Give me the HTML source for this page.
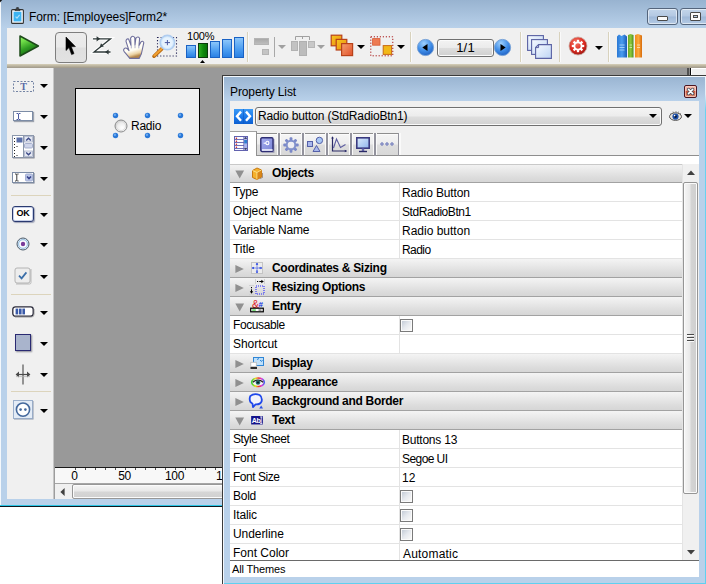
<!DOCTYPE html>
<html><head><meta charset="utf-8">
<style>
*{box-sizing:border-box;margin:0;padding:0}
html,body{width:706px;height:584px;overflow:hidden;background:#fff}
body{position:relative;font-family:"Liberation Sans",sans-serif;font-size:12px;color:#000}
.a{position:absolute}
svg{position:absolute;overflow:visible}
/* main window */
#win{left:0;top:0;width:706px;height:507px;background:#b9d1ea;border-bottom:1px solid #0e1820;box-shadow:inset 0 -1px 0 #2cc6e6}
#tbar{left:0;top:0;width:706px;height:28px;background:linear-gradient(#98b3d0 0,#b9d1ea 100%)}
#title{left:29px;top:10px;font-size:12px;line-height:14px;white-space:nowrap;letter-spacing:-0.08px}
#tool{left:7px;top:28px;width:699px;height:36px;background:#f0f0f0}
#tan{left:7px;top:64px;width:699px;height:4px;background:linear-gradient(#d6cfba,#bdb6a0 45%,#9e978a)}
#side{left:7px;top:68px;width:46px;height:431px;background:#f0f0f0}
#sideline{left:53px;top:68px;width:2px;height:431px;background:linear-gradient(90deg,#c6c6c6 50%,#9d9d9d 50%)}
#canvas{left:54px;top:68px;width:633px;height:400px;background:#999}
.sep{width:1px;top:32px;height:30px;background:#d8d2bd;box-shadow:1px 0 0 #fafafa}
.dd{width:0;height:0;border-left:4px solid transparent;border-right:4px solid transparent;border-top:4px solid #000}
.dd.g{border-top-color:#a0a0a0}
/* panel */
#panel{left:222px;top:75px;width:484px;height:509px;background:#b9d1ea;border-left:1px solid #3b3b3b;border-top:1px solid #3b3b3b}
#pbody{left:230px;top:101px;width:469px;height:476px;background:#f0f0f0}
.row{left:230px;width:452px;height:19px;background:#fff;border-bottom:1px solid #e3e3e3;white-space:nowrap}
.row .l{position:absolute;left:3px;top:2px;line-height:14px}
.row .v{position:absolute;left:172px;top:3px;line-height:14px}
.row .c{position:absolute;left:169px;top:0;width:1px;height:18px;background:#e3e3e3}
.hd{left:230px;width:452px;height:19px;background:linear-gradient(#f4f4f4,#e9e9e9 35%,#dcdcdc 75%,#d6d6d6 100%);border-bottom:1px solid #a2a2a2;white-space:nowrap}
.hd b{position:absolute;left:42px;top:2px;line-height:14px;letter-spacing:-0.3px}
.cb{position:absolute;left:170px;top:3px;width:13px;height:13px;border:1px solid #7a7a7a;background:linear-gradient(135deg,#c9d0da 15%,#e6e9ee 50%,#f6f6f6 85%);box-shadow:inset 0 0 0 1px #fafafa;}
</style></head><body>
<div id="win" class="a"></div>
<div id="tbar" class="a"></div>
<div id="title" class="a">Form: [Employees]Form2*</div>
<div id="tool" class="a"></div>
<div id="tan" class="a"></div>
<div id="side" class="a"></div>
<div id="sideline" class="a"></div>
<div id="canvas" class="a"></div>
<div class="a" style="left:0;top:0;width:1px;height:505px;background:#f4f8fc"></div>
<div class="a" style="left:1px;top:28px;width:6px;height:471px;background:#b9d1ea"></div>
<div class="a" style="left:1px;top:499px;width:221px;height:6px;background:#b9d1ea"></div>
<svg width="3" height="3" style="left:0;top:0" viewBox="0 0 3 3"><path d="M0 0H2.2L0 2.6Z" fill="#111"/></svg>
<svg width="13" height="17" style="left:11px;top:7px" viewBox="0 0 13 17"><rect x=".6" y="2.6" width="11.8" height="13.8" rx="1" fill="#f2f6fa" stroke="#333" stroke-width="1.1"/><rect x="2.6" y="4.8" width="7.8" height="9.6" fill="#3db4f2"/><path d="M4 3.6H9V2.2H7.4V.6H5.6V2.2H4Z" fill="#444" stroke="#222" stroke-width=".6"/><path d="M4.6 9.6 L6 11.2 L8.6 7.8" fill="none" stroke="#aee0fa" stroke-width="1.1"/></svg>
<div class="a" style="left:647px;top:8px;width:31px;height:17px;border:1px solid #54657c;border-radius:3px;background:linear-gradient(#c3d5ea,#b3c8e2 48%,#9fb8d8 52%,#b4cae4);box-shadow:inset 0 0 0 1px rgba(255,255,255,.55)"></div>
<div class="a" style="left:657px;top:16px;width:11px;height:5px;border:1px solid #4a4a4a;border-radius:1px;background:#fafafa"></div>
<div class="a" style="left:680px;top:8px;width:31px;height:17px;border:1px solid #54657c;border-radius:3px;background:linear-gradient(#c3d5ea,#b3c8e2 48%,#9fb8d8 52%,#b4cae4);box-shadow:inset 0 0 0 1px rgba(255,255,255,.55)"></div>
<div class="a" style="left:690px;top:12px;width:11px;height:9px;border:1px solid #4a4a4a;border-radius:1px;background:#fafafa"></div>
<div class="a" style="left:693px;top:15px;width:5px;height:3px;border:1px solid #4a4a4a;background:#b8cce4"></div>
<svg width="22" height="24" style="left:18px;top:34px" viewBox="0 0 22 24"><defs><linearGradient id="pl" x1=".1" y1="0" x2=".55" y2="1"><stop offset="0" stop-color="#8ff562"/><stop offset=".25" stop-color="#6fdc48"/><stop offset=".6" stop-color="#2f9c22"/><stop offset="1" stop-color="#0f5c0c"/></linearGradient></defs><path d="M2 2 L20.4 12 L2 22Z" fill="url(#pl)" stroke="#1d4a1a" stroke-width="1.5" stroke-linejoin="round"/></svg>
<div class="a" style="left:55px;top:32px;width:32px;height:31px;border:1px solid #7e7e7e;border-radius:4px;background:linear-gradient(#ececec,#e9e9e9 48%,#dfdfdf 52%,#e2e2e2)"></div>
<svg width="12" height="20" style="left:65px;top:36px" viewBox="0 0 12 20"><path d="M1 1 V14.5 L4 11.6 L6.6 18.6 L9 17.6 L6.3 10.8 L10.4 10.6Z" fill="#000" stroke="#000" stroke-width=".6" stroke-linejoin="round"/></svg>
<svg width="20" height="22" style="left:92px;top:35px" viewBox="0 0 20 22"><g fill="none" stroke="#fff" stroke-width="3.4" opacity=".9"><path d="M1 3.8H18.5L2 17H18.5"/></g><g fill="none" stroke="#2f3a3a" stroke-width="1.3"><path d="M1 3.8H18.5L2 17H18.5"/></g><path d="M8.2 3.8 L4.6 1.2V6.4Z M13 17 L16.6 14.4V19.6Z M7.6 12.6 L11.8 11.6 L9 8.2Z" fill="#2f3a3a"/></svg>
<svg width="22" height="25" style="left:123px;top:35px" viewBox="0 0 22 25"><defs><linearGradient id="hd" x1="0" y1="0" x2=".25" y2="1"><stop offset="0" stop-color="#fff"/><stop offset=".7" stop-color="#fffdf4"/><stop offset=".88" stop-color="#ecd3a4"/><stop offset="1" stop-color="#b4864a"/></linearGradient></defs><path d="M1 14 Q2.6 12 4.6 14 L6 15.6 L3 6.4 Q3 3.4 5.6 4 L8 10.4 L7.6 3 Q9.6 -.2 11.8 2.6 L12 10 L12.8 3.4 Q14.8 .6 16.6 3.2 L16 10.6 L17.8 7.2 Q19.8 5.2 20.8 7.6 L19.4 14.2 Q18.8 19.4 16.2 23.4 H6.8 Q4.2 20 1.2 16.6 Q0 15 1 14Z" fill="url(#hd)" stroke="#6e6e9c" stroke-width="1.1" stroke-linejoin="round"/><path d="M8.3 10.6V13.4M12 10.2V13.2M15.8 10.8V13.4" stroke="#9a9ac0" stroke-width=".8"/></svg>
<svg width="26" height="24" style="left:152px;top:34px" viewBox="0 0 26 24"><rect x="5.5" y="3.5" width="19" height="18.5" fill="none" stroke="#1e1e50" stroke-width="1.1" stroke-dasharray="1.1 2"/><path d="M10 14.6 L2 22.2" stroke="#b86a10" stroke-width="3.6" stroke-linecap="round"/><path d="M10 14.4 L2.4 21.6" stroke="#f2a030" stroke-width="2" stroke-linecap="round"/><circle cx="15.4" cy="8.6" r="7.2" fill="#d4eafd" stroke="#b0cdf0" stroke-width="1.6"/><circle cx="15.4" cy="8.6" r="5.4" fill="#eaf5fe" opacity=".85"/><path d="M12.8 8.6H18M15.4 6V11.2" stroke="#4a5aa2" stroke-width="1"/></svg>
<div class="a" style="left:187px;top:30px;font-size:11px;line-height:12px;letter-spacing:-.2px;white-space:nowrap">100%</div>
<div class="a" style="left:186px;top:45px;width:10px;height:13px;border:1px solid #1a62c4;background:linear-gradient(#8cc6fa,#4a9cf0 60%,#2a80e4)"></div>
<div class="a" style="left:198px;top:43px;width:10px;height:15px;border:1px solid #0a3a0a;background:linear-gradient(90deg,#2fae22,#0f8a0c 50%,#087008)"></div>
<div class="a" style="left:210px;top:41px;width:10px;height:17px;border:1px solid #1a62c4;background:linear-gradient(#8cc6fa,#4a9cf0 60%,#2a80e4)"></div>
<div class="a" style="left:222px;top:39px;width:10px;height:19px;border:1px solid #1a62c4;background:linear-gradient(#8cc6fa,#4a9cf0 60%,#2a80e4)"></div>
<div class="a" style="left:234px;top:37px;width:10px;height:21px;border:1px solid #1a62c4;background:linear-gradient(#8cc6fa,#4a9cf0 60%,#2a80e4)"></div>
<svg width="5" height="3" style="left:200px;top:59.5px" viewBox="0 0 5 3"><path d="M0 3L2.5 0L5 3Z" fill="#000"/></svg>
<div class="a sep" style="left:247px"></div>
<div class="a sep" style="left:410px"></div>
<div class="a sep" style="left:520px"></div>
<div class="a sep" style="left:559px"></div>
<div class="a sep" style="left:608px"></div>
<div class="a" style="left:254px;top:38px;width:15px;height:7px;background:linear-gradient(#a8a8a8,#bdbdbd);border:1px solid #b4b4b4"></div>
<div class="a" style="left:262px;top:49px;width:7px;height:6px;background:#c4c4c4;border:1px solid #b4b4b4"></div>
<div class="a" style="left:274px;top:37px;width:1px;height:20px;background:#a8a8a8"></div>
<div class="a dd g" style="left:278px;top:45px"></div>
<svg width="26" height="22" style="left:290px;top:35px" viewBox="0 0 26 22"><path d="M5.5 5V1.5H19.5V5M12.5 1.5V4" fill="none" stroke="#a0a0a0" stroke-width="1"/><rect x="1.5" y="6.5" width="6" height="9" fill="#c2c2c2" stroke="#b2b2b2"/><rect x="9.5" y="6.5" width="7" height="14" fill="#bcbcbc" stroke="#b0b0b0"/><rect x="18.5" y="6.5" width="6" height="6" fill="#c8c8c8" stroke="#b6b6b6"/></svg>
<div class="a dd g" style="left:317px;top:45px"></div>
<svg width="24" height="23" style="left:330px;top:34px" viewBox="0 0 24 23"><defs><linearGradient id="og" x1="0" y1="0" x2="1" y2="1"><stop offset="0" stop-color="#f8c820"/><stop offset="1" stop-color="#e88a10"/></linearGradient><linearGradient id="or" x1="0" y1="0" x2="1" y2="1"><stop offset="0" stop-color="#f6a070"/><stop offset="1" stop-color="#e0502a"/></linearGradient></defs><rect x="1.2" y="1.2" width="10.6" height="10.6" fill="url(#og)" stroke="#b8421a" stroke-width="1.2"/><rect x="6.2" y="5.4" width="10.6" height="10.6" fill="url(#og)" stroke="#b8421a" stroke-width="1.2"/><rect x="11.6" y="9.6" width="11" height="12" fill="url(#or)" stroke="#b8421a" stroke-width="1.2"/></svg>
<div class="a dd" style="left:357px;top:45px"></div>
<svg width="24" height="21" style="left:370px;top:36px" viewBox="0 0 24 21"><rect x=".8" y=".8" width="22" height="19" fill="none" stroke="#a81414" stroke-width="1" stroke-dasharray="1.2 1.8"/><rect x="2.6" y="2.6" width="7.4" height="6.6" fill="#ee7a52" stroke="#d85a36" stroke-width=".8"/><rect x="13.2" y="9.6" width="8.4" height="8.8" fill="#f2b818" stroke="#c86a14" stroke-width="1"/></svg>
<div class="a dd" style="left:397px;top:45px"></div>
<svg width="19" height="19" style="left:416.0px;top:37.5px" viewBox="-9.5 -9.5 19 19"><defs><radialGradient id="nvL" cx=".4" cy=".25" r=".9"><stop offset="0" stop-color="#9fd0fb"/><stop offset=".5" stop-color="#3f8de8"/><stop offset="1" stop-color="#1450b4"/></radialGradient></defs><circle r="8.1" fill="url(#nvL)" stroke="#7aa4d8" stroke-width="1"/><path d="M-3.2 0 L2 -3.4 V3.4Z" fill="#000"/></svg>
<svg width="19" height="19" style="left:493.0px;top:37.5px" viewBox="-9.5 -9.5 19 19"><defs><radialGradient id="nvR" cx=".4" cy=".25" r=".9"><stop offset="0" stop-color="#9fd0fb"/><stop offset=".5" stop-color="#3f8de8"/><stop offset="1" stop-color="#1450b4"/></radialGradient></defs><circle r="8.1" fill="url(#nvR)" stroke="#7aa4d8" stroke-width="1"/><path d="M3.2 0 L-2 -3.4 V3.4Z" fill="#000"/></svg>
<div class="a" style="left:437px;top:39px;width:57px;height:18px;border:1px solid #707070;border-radius:3px;background:linear-gradient(#f3f3f3,#ebebeb 48%,#dddddd 52%,#d0d0d0);box-shadow:inset 0 0 0 1px #fbfbfb"></div>
<div class="a" style="left:437px;top:40px;width:57px;text-align:center;font-size:13px;line-height:16px;letter-spacing:.2px">1/1</div>
<svg width="26" height="25" style="left:527px;top:35px" viewBox="0 0 26 25"><defs><linearGradient id="pg" x1="0" y1="0" x2="1" y2="1"><stop offset="0" stop-color="#f6faff"/><stop offset="1" stop-color="#bdd4f4"/></linearGradient></defs><rect x=".6" y=".6" width="15.8" height="14.8" fill="url(#pg)" stroke="#5a62a4" stroke-width="1.1"/><rect x="4.6" y="4.6" width="15.8" height="14.8" fill="url(#pg)" stroke="#5a62a4" stroke-width="1.1"/><path d="M11.6 9.6H24.4V23.4H8.6V12.6Z" fill="url(#pg)" stroke="#5a62a4" stroke-width="1.1"/><path d="M8.6 12.6H11.6V9.6" fill="none" stroke="#5a62a4" stroke-width="1"/></svg>
<svg width="20" height="20" style="left:567.5px;top:35.5px" viewBox="-10 -10 20 20"><defs><radialGradient id="rg" cx=".4" cy=".3" r=".8"><stop offset="0" stop-color="#f47a6a"/><stop offset=".55" stop-color="#dc2a20"/><stop offset="1" stop-color="#8e1410"/></radialGradient></defs><circle r="9" fill="url(#rg)" stroke="#c8a8a0" stroke-width=".8"/><g fill="#fff"><rect x="-1.1" y="-6.2" width="2.2" height="3" transform="rotate(0)"/><rect x="-1.1" y="-6.2" width="2.2" height="3" transform="rotate(45)"/><rect x="-1.1" y="-6.2" width="2.2" height="3" transform="rotate(90)"/><rect x="-1.1" y="-6.2" width="2.2" height="3" transform="rotate(135)"/><rect x="-1.1" y="-6.2" width="2.2" height="3" transform="rotate(180)"/><rect x="-1.1" y="-6.2" width="2.2" height="3" transform="rotate(225)"/><rect x="-1.1" y="-6.2" width="2.2" height="3" transform="rotate(270)"/><rect x="-1.1" y="-6.2" width="2.2" height="3" transform="rotate(315)"/></g><circle r="3.6" fill="none" stroke="#fff" stroke-width="1.8"/></svg>
<div class="a dd" style="left:595px;top:46px"></div>
<svg width="27" height="26" style="left:616px;top:33px" viewBox="0 0 27 26"><defs><linearGradient id="b1" x1="0" x2="1"><stop offset="0" stop-color="#2a78d4"/><stop offset=".5" stop-color="#4a9cf0"/><stop offset="1" stop-color="#1a5cb8"/></linearGradient><linearGradient id="b2" x1="0" x2="1"><stop offset="0" stop-color="#6aa828"/><stop offset=".5" stop-color="#8cc83c"/><stop offset="1" stop-color="#4c8c1c"/></linearGradient><linearGradient id="b3" x1="0" x2="1"><stop offset="0" stop-color="#f08a18"/><stop offset=".5" stop-color="#fca83c"/><stop offset="1" stop-color="#d86c0c"/></linearGradient></defs><path d="M1 3.5 L3 1.5 L5.5 3 L8.5 1.5 L11 3.5 V24.5 H1Z" fill="url(#b1)"/><path d="M12 2 L14.5 1 L17.5 2 V24.5 H12Z" fill="url(#b2)"/><path d="M19 2 L22 1 L26 2.4 V24.5 H19Z" fill="url(#b3)"/><path d="M3.5 12H8.5M3.5 14.5H8.5M3.5 17H8.5" stroke="#9ccaf8" stroke-width="1"/><path d="M13.5 12H16M13.5 14.5H16" stroke="#c4e89c" stroke-width="1"/><path d="M21 12H24M21 14.5H24" stroke="#fcd8a0" stroke-width="1"/></svg>
<svg width="21" height="11" style="left:13px;top:80.5px" viewBox="0 0 21 11"><rect x=".5" y=".5" width="20" height="10" fill="none" stroke="#7484a4" stroke-width="1" stroke-dasharray="2 1.5"/><text x="10.5" y="9" text-anchor="middle" font-family="Liberation Serif" font-weight="bold" font-size="10" fill="#5a6aa6">T</text></svg>
<div class="a dd" style="left:40px;top:84px"></div>
<div class="a" style="left:13px;top:111px;width:20px;height:10px;border:1px solid #7c8ca6;background:#fff;box-shadow:1px 1px 1px rgba(90,100,120,.55)"></div>
<svg width="5" height="7" style="left:15.5px;top:112.5px" viewBox="0 0 5 7"><path d="M.5 .5H2L2.5 1L3 .5H4.5M2.5 1V6M.5 6.5H2L2.5 6L3 6.5H4.5" fill="none" stroke="#3a4a9a" stroke-width=".9"/></svg>
<div class="a dd" style="left:40px;top:115px"></div>
<svg width="23" height="24" style="left:12px;top:135px" viewBox="0 0 23 24"><rect x=".5" y=".5" width="21" height="22" fill="#fff" stroke="#8c98ac"/><path d="M1 23.2H22.4V1" fill="none" stroke="#8a8a96" stroke-width="1" opacity=".7"/><rect x="4.5" y="2.5" width="6" height="5" fill="#5a6ea8"/><path d="M2.5 3V22" stroke="#222" stroke-width="1" stroke-dasharray="1 2"/><path d="M4.5 11.5H5.5M4.5 20.5H5.5" stroke="#222"/><path d="M11.5 1V22" stroke="#8c98ac"/><rect x="12.5" y="1.5" width="8" height="5.5" fill="#e4e8f2" stroke="#a8b0c8" stroke-width=".8"/><rect x="12.5" y="8.5" width="8" height="4.5" rx="1" fill="#d0d6ea" stroke="#98a2c4" stroke-width=".8"/><rect x="12.5" y="16" width="8" height="5.5" fill="#e4e8f2" stroke="#a8b0c8" stroke-width=".8"/><path d="M14.2 5.4L16.5 3.2L18.8 5.4M14.2 17.6L16.5 19.8L18.8 17.6" fill="none" stroke="#3c4a88" stroke-width="1.4"/></svg>
<div class="a dd" style="left:40px;top:146px"></div>
<svg width="23" height="12" style="left:12px;top:172px" viewBox="0 0 23 12"><rect x=".5" y=".5" width="21" height="10" fill="#fff" stroke="#7c8ca6"/><path d="M1 11.3H22.3V1" fill="none" stroke="#80889a" opacity=".7"/><path d="M3 2H4.2L4.8 2.6L5.4 2H6.6M4.8 2.6V8.4M3 9H4.2L4.8 8.4L5.4 9H6.6" fill="none" stroke="#222" stroke-width=".9"/><rect x="13.5" y="2" width="7" height="7" rx="1" fill="#bcc6e6" stroke="#98a4cc" stroke-width=".8"/><path d="M15 4.4L17 6.6L19 4.4" fill="none" stroke="#34408a" stroke-width="1.5"/></svg>
<div class="a dd" style="left:40px;top:177px"></div>
<div class="a" style="left:11px;top:195px;width:40px;height:1px;background:#dcd4bc"></div>
<div class="a" style="left:11px;top:294px;width:40px;height:1px;background:#dcd4bc"></div>
<div class="a" style="left:11px;top:391px;width:40px;height:1px;background:#dcd4bc"></div>
<div class="a" style="left:12px;top:206px;width:22px;height:16px;border:1.5px solid #2a3a70;border-radius:3px;background:#fff;box-shadow:inset 0 0 0 1px #c8d0e8,1px 1px 1px rgba(80,90,130,.5);font-size:9px;font-weight:bold;line-height:13px;text-align:center;letter-spacing:-.3px">OK</div>
<div class="a dd" style="left:40px;top:213px"></div>
<svg width="14" height="14" style="left:15.5px;top:237px" viewBox="-7 -7 14 14"><circle r="6" fill="#e8f0f8" stroke="#4a5a6a" stroke-width="1"/><circle r="4.4" fill="#fdfdff" stroke="#9ec4e4" stroke-width="1.2"/><circle r="2.2" fill="#7a3c9a"/></svg>
<div class="a dd" style="left:40px;top:243px"></div>
<svg width="18" height="18" style="left:14px;top:267px" viewBox="0 0 18 18"><rect x="1" y="1" width="15" height="15" rx="2" fill="#ededed" stroke="#b4b4b4"/><path d="M2 17H15.5Q17 17 17 15.5V2" fill="none" stroke="#9a9a9a" opacity=".6"/><path d="M5 8.6L7.6 11.4L12.4 5.4" fill="none" stroke="#3a6ea8" stroke-width="1.7"/></svg>
<div class="a dd" style="left:40px;top:275px"></div>
<svg width="23" height="12" style="left:12px;top:306px" viewBox="0 0 23 12"><rect x=".8" y=".8" width="20.4" height="9.4" rx="2.6" fill="#fff" stroke="#2a2a3a" stroke-width="1.3"/><path d="M3 11.2H19Q22.2 11.2 22.2 8V3" fill="none" stroke="#888" opacity=".6"/><rect x="3.6" y="2.6" width="2.6" height="5.8" fill="#3a5aa8"/><rect x="7" y="2.6" width="2.6" height="5.8" fill="#3a5aa8"/><rect x="10.4" y="2.6" width="2.6" height="5.8" fill="#3a5aa8"/></svg>
<div class="a dd" style="left:40px;top:311px"></div>
<div class="a" style="left:15px;top:334px;width:16px;height:17px;border:1.4px solid #2a2a72;background:#a9b4cc;box-shadow:1px 1px 1.5px rgba(70,70,90,.6)"></div>
<div class="a dd" style="left:40px;top:342px"></div>
<svg width="16" height="21" style="left:15px;top:364px" viewBox="0 0 16 21"><path d="M8 .5V20.5" stroke="#555" stroke-width="1.2"/><path d="M1.5 10.5H14.5" stroke="#4a4a4a" stroke-width="1.2"/><path d="M.6 10.5L4 7.6V13.4Z M15.4 10.5L12 7.6V13.4Z" fill="#4a4a4a"/><path d="M1 12.6H15" stroke="#b0b0b0" stroke-width="1" opacity=".7"/></svg>
<div class="a dd" style="left:40px;top:373px"></div>
<svg width="21" height="20" style="left:13px;top:400px" viewBox="0 0 21 20"><rect x=".5" y=".5" width="19" height="18" fill="#e4ecf6" stroke="#9cb0cc"/><path d="M1 19.3H20.3V1" fill="none" stroke="#8a94a8" opacity=".6"/><circle cx="10" cy="9.6" r="6.6" fill="#fff" stroke="#44689c" stroke-width="1.6"/><circle cx="7.6" cy="9.6" r="1.3" fill="#44689c"/><circle cx="12.4" cy="9.6" r="1.3" fill="#44689c"/></svg>
<div class="a dd" style="left:40px;top:409px"></div>
<div class="a" style="left:75px;top:88px;width:125px;height:67px;background:#f0f0f0;border:1px solid #000"></div>
<svg width="7" height="7" style="left:111.8px;top:111.5px" viewBox="-3.5 -3.5 7 7"><circle r="2.7" fill="#2a78d8"/><circle cx="-.6" cy="-.7" r="1.2" fill="#6aa8ec"/></svg>
<svg width="7" height="7" style="left:143.7px;top:111.5px" viewBox="-3.5 -3.5 7 7"><circle r="2.7" fill="#2a78d8"/><circle cx="-.6" cy="-.7" r="1.2" fill="#6aa8ec"/></svg>
<svg width="7" height="7" style="left:176.7px;top:111.5px" viewBox="-3.5 -3.5 7 7"><circle r="2.7" fill="#2a78d8"/><circle cx="-.6" cy="-.7" r="1.2" fill="#6aa8ec"/></svg>
<svg width="7" height="7" style="left:111.8px;top:131.5px" viewBox="-3.5 -3.5 7 7"><circle r="2.7" fill="#2a78d8"/><circle cx="-.6" cy="-.7" r="1.2" fill="#6aa8ec"/></svg>
<svg width="7" height="7" style="left:143.7px;top:131.5px" viewBox="-3.5 -3.5 7 7"><circle r="2.7" fill="#2a78d8"/><circle cx="-.6" cy="-.7" r="1.2" fill="#6aa8ec"/></svg>
<svg width="7" height="7" style="left:176.7px;top:131.5px" viewBox="-3.5 -3.5 7 7"><circle r="2.7" fill="#2a78d8"/><circle cx="-.6" cy="-.7" r="1.2" fill="#6aa8ec"/></svg>
<svg width="14" height="14" style="left:113.8px;top:118.6px" viewBox="-7 -7 14 14"><defs><radialGradient id="rd" cx=".6" cy=".65" r=".7"><stop offset="0" stop-color="#fff"/><stop offset=".6" stop-color="#ececec"/><stop offset="1" stop-color="#c6c6c6"/></radialGradient></defs><circle r="6" fill="url(#rd)" stroke="#8a8b8c" stroke-width="1"/><circle r="4.6" fill="none" stroke="#d8d8d8" stroke-width=".8"/></svg>
<div class="a" style="left:131px;top:119px;line-height:14px;letter-spacing:-.25px">Radio</div>
<div class="a" style="left:687px;top:68px;width:2px;height:8px;background:#525252"></div>
<div class="a" style="left:689px;top:68px;width:1px;height:8px;background:#8c8c8c"></div>
<div class="a" style="left:690px;top:68px;width:1px;height:8px;background:#0a0a0a"></div>
<div class="a" style="left:691px;top:68px;width:15px;height:8px;background:#f0f0f0;border-left:1px solid #fff;border-top:1px solid #fff"></div>
<div class="a" style="left:55px;top:467px;width:167px;height:1px;background:#1a1a1a"></div>
<div class="a" style="left:55px;top:468px;width:167px;height:15px;background:#f8f8f8"></div>
<div class="a" style="left:55px;top:483px;width:167px;height:1px;background:#a6a6a6"></div>
<div class="a" style="left:55px;top:484px;width:167px;height:15px;background:#f0f0f0"></div>
<div class="a" style="left:75px;top:468px;width:1px;height:2px;background:#555"></div><div class="a" style="left:85px;top:468px;width:1px;height:2px;background:#555"></div><div class="a" style="left:95px;top:468px;width:1px;height:2px;background:#555"></div><div class="a" style="left:105px;top:468px;width:1px;height:2px;background:#555"></div><div class="a" style="left:115px;top:468px;width:1px;height:2px;background:#555"></div><div class="a" style="left:125px;top:468px;width:1px;height:2px;background:#555"></div><div class="a" style="left:135px;top:468px;width:1px;height:2px;background:#555"></div><div class="a" style="left:145px;top:468px;width:1px;height:2px;background:#555"></div><div class="a" style="left:155px;top:468px;width:1px;height:2px;background:#555"></div><div class="a" style="left:165px;top:468px;width:1px;height:2px;background:#555"></div><div class="a" style="left:175px;top:468px;width:1px;height:2px;background:#555"></div><div class="a" style="left:185px;top:468px;width:1px;height:2px;background:#555"></div><div class="a" style="left:195px;top:468px;width:1px;height:2px;background:#555"></div><div class="a" style="left:205px;top:468px;width:1px;height:2px;background:#555"></div><div class="a" style="left:215px;top:468px;width:1px;height:2px;background:#555"></div>
<div class="a" style="left:54.5px;top:470px;width:40px;text-align:center;line-height:13px;font-size:12px;letter-spacing:-.3px">0</div>
<div class="a" style="left:104.5px;top:470px;width:40px;text-align:center;line-height:13px;font-size:12px;letter-spacing:-.3px">50</div>
<div class="a" style="left:154.5px;top:470px;width:40px;text-align:center;line-height:13px;font-size:12px;letter-spacing:-.3px">100</div>
<div class="a" style="left:216px;top:470px;width:6px;overflow:hidden;line-height:13px;font-size:12px;letter-spacing:-.3px">150</div>
<svg width="5" height="8" style="left:59.5px;top:487.5px" viewBox="0 0 5 8"><path d="M4.6 0L.4 4L4.6 8Z" fill="#404040"/></svg>
<div class="a" style="left:72px;top:484px;width:160px;height:15px;border:1px solid #979797;border-radius:2px;background:linear-gradient(#f5f5f5,#e9e9e9 45%,#d6d6d6 55%,#d0d0d0);box-shadow:inset 0 0 0 1px #fbfbfb"></div>
<div id="panel" class="a"></div>
<div id="pbody" class="a"></div>
<div class="a hd" style="top:164px"><svg width="10" height="10" style="left:5px;top:5px" viewBox="0 0 10 10"><path d="M0.3 1.4 H9.1 L4.7 9.6 Z" fill="#909090"/></svg><svg width="12" height="13" style="left:21px;top:3px" viewBox="0 0 12 13"><path d="M1.5 3.5 L6 1 L10.5 3 L10.5 10 L6 12.5 L1.5 10.5Z" fill="#f5b12c" stroke="#c77a10" stroke-width="1"/><path d="M1.5 3.5 L6 5.5 L10.5 3 M6 5.5V12.5" fill="none" stroke="#fbe08a" stroke-width="1"/><path d="M6.5 5.8 L10.5 3.4 V10 L6.5 12.2Z" fill="#d9861a"/><path d="M9 11.5 L11.5 10.5 V6" stroke="#7a5a40" stroke-width="1" fill="none" opacity=".6"/></svg><b>Objects</b></div>
<div class="a row" style="top:183px"><span class="l" style="letter-spacing:-0.17px">Type</span><span class="c"></span><span class="v" style="letter-spacing:-0.13px">Radio Button</span></div>
<div class="a row" style="top:202px"><span class="l" style="letter-spacing:-0.05px">Object Name</span><span class="c"></span><span class="v" style="letter-spacing:-0.44px">StdRadioBtn1</span></div>
<div class="a row" style="top:221px"><span class="l" style="letter-spacing:-0.17px">Variable Name</span><span class="c"></span><span class="v" style="letter-spacing:0px">Radio button</span></div>
<div class="a row" style="top:240px"><span class="l" style="letter-spacing:-0.06px">Title</span><span class="c"></span><span class="v" style="letter-spacing:-0.55px">Radio</span></div>
<div class="a hd" style="top:259px"><svg width="10" height="10" style="left:5px;top:5px" viewBox="0 0 10 10"><path d="M0.4 0.9 L8.8 5 L0.4 9.1 Z" fill="#909090"/></svg><svg width="12" height="12" style="left:21px;top:3px" viewBox="0 0 12 12"><rect x=".5" y=".5" width="11" height="11" fill="#ececec" stroke="#c4c4c4"/><path d="M6 1.5V4.5M6 7.5V10.5M1.5 6H4.5M7.5 6H10.5" stroke="#1030e0" stroke-width="1" stroke-dasharray="1.5 .5"/><path d="M6 .8 L7.3 2.6H4.7Z M6 11.2 L7.3 9.4H4.7Z M.8 6 L2.6 4.7V7.3Z M11.2 6 L9.4 4.7V7.3Z" fill="#1030e0"/><rect x="5.4" y="5.4" width="1.3" height="1.3" fill="#1030e0"/></svg><b>Coordinates &amp; Sizing</b></div>
<div class="a hd" style="top:278px"><svg width="10" height="10" style="left:5px;top:5px" viewBox="0 0 10 10"><path d="M0.4 0.9 L8.8 5 L0.4 9.1 Z" fill="#909090"/></svg><svg width="16" height="16" style="left:19px;top:1px" viewBox="0 0 16 16"><path d="M6.5 0V5 M0 6.5H5 M0 15.5H5 M15.5 0V5" stroke="#d0d0d0" stroke-width="1"/><rect x="7" y="7" width="8" height="8" fill="none" stroke="#2a2aff" stroke-width="1.1" stroke-dasharray="1 1"/><path d="M8 2.5H9.2 M10.3 2.5H13" stroke="#000" stroke-width="1"/><path d="M14.8 2.5 L12.3 .8V4.2Z" fill="#000"/><path d="M2.5 8V9.2 M2.5 10.3V13" stroke="#000" stroke-width="1"/><path d="M2.5 14.8 L.8 12.3H4.2Z" fill="#000"/></svg><b>Resizing Options</b></div>
<div class="a hd" style="top:297px"><svg width="10" height="10" style="left:5px;top:5px" viewBox="0 0 10 10"><path d="M0.3 1.4 H9.1 L4.7 9.6 Z" fill="#909090"/></svg><svg width="14" height="13" style="left:20px;top:3px" viewBox="0 0 14 13"><text x="2" y="8" font-family="Liberation Sans" font-size="10.5" fill="#e02020">&amp;</text><text x="8.6" y="6.6" font-family="Liberation Sans" font-size="8" font-weight="bold" fill="#1030e0">#</text><rect x=".7" y="8.2" width="12.6" height="3.6" fill="#fff" stroke="#000" stroke-width="1.2"/><rect x="2.2" y="9.5" width="3.6" height="1.1" fill="#20c020"/><rect x="8.5" y="9.5" width="3" height="1.1" fill="#555"/></svg><b>Entry</b></div>
<div class="a row" style="top:316px"><span class="l" style="letter-spacing:-0.4px">Focusable</span><span class="c"></span><span class="cb"></span></div>
<div class="a row" style="top:335px"><span class="l" style="letter-spacing:-0.05px">Shortcut</span><span class="c"></span><span class="v" style="letter-spacing:0px"></span></div>
<div class="a hd" style="top:354px"><svg width="10" height="10" style="left:5px;top:5px" viewBox="0 0 10 10"><path d="M0.4 0.9 L8.8 5 L0.4 9.1 Z" fill="#909090"/></svg><svg width="14" height="12" style="left:20px;top:3px" viewBox="0 0 14 12"><rect x="3.5" y=".5" width="10" height="8" fill="#bfe0fa" stroke="#2f86d6"/><path d="M7 2.5 L9 1.5 M10 3 L11.5 4.5 L12.5 3" stroke="#2f86d6" stroke-width="1" fill="none"/><rect x=".8" y="5.3" width="5.5" height="4.4" fill="#fff" stroke="#b8b8b8" stroke-width=".8"/><path d="M.5 11H7" stroke="#000" stroke-width="1.6"/></svg><b>Display</b></div>
<div class="a hd" style="top:373px"><svg width="10" height="10" style="left:5px;top:5px" viewBox="0 0 10 10"><path d="M0.4 0.9 L8.8 5 L0.4 9.1 Z" fill="#909090"/></svg><svg width="14" height="10.5" style="left:20.5px;top:4px" viewBox="0 0 16 12"><defs><linearGradient id="rb" x1="0" x2="1"><stop offset="0" stop-color="#30d030"/><stop offset=".3" stop-color="#e8e020"/><stop offset=".55" stop-color="#f03030"/><stop offset=".8" stop-color="#e040e0"/><stop offset="1" stop-color="#4060f0"/></linearGradient></defs><ellipse cx="8" cy="6" rx="7.2" ry="4.8" fill="none" stroke="url(#rb)" stroke-width="1.8"/><ellipse cx="8" cy="6.2" rx="5.8" ry="3.4" fill="#f4f4f4"/><path d="M2 6 Q8 1 14 6" fill="none" stroke="#222" stroke-width="1.4"/><circle cx="8" cy="6.2" r="2.6" fill="#1f6a70"/><circle cx="8" cy="6.2" r="1.2" fill="#0a1a20"/></svg><b>Appearance</b></div>
<div class="a hd" style="top:392px"><svg width="10" height="10" style="left:5px;top:5px" viewBox="0 0 10 10"><path d="M0.4 0.9 L8.8 5 L0.4 9.1 Z" fill="#909090"/></svg><svg width="16" height="16" style="left:18px;top:1px" viewBox="0 0 16 16"><path d="M2.2 3.2 Q1 6.5 2.6 9.2 L4.5 10.6 L5 14 L7.6 11.4 Q12.5 11.6 13.6 8.4 Q14.5 4 11.6 2 Q6 -.2 2.2 3.2Z" fill="#f2f4fb" stroke="#1f48ea" stroke-width="1.8" stroke-linejoin="round"/><path d="M11.2 15.6 L15 15.6 L13.2 12.4Z" fill="#2a52e8"/></svg><b>Background and Border</b></div>
<div class="a hd" style="top:411px"><svg width="10" height="10" style="left:5px;top:5px" viewBox="0 0 10 10"><path d="M0.3 1.4 H9.1 L4.7 9.6 Z" fill="#909090"/></svg><svg width="12" height="9" style="left:21px;top:4.5px" viewBox="0 0 13 10"><rect x="0" y="0" width="13" height="9.4" fill="#14148c"/><text x=".6" y="7.8" font-family="Liberation Sans" font-size="8" font-weight="bold" fill="#fff" letter-spacing="-.4">Ab</text><path d="M10 1H12.4 M11.2 1V8.4 M10 8.4H12.4" stroke="#fff" stroke-width=".9"/></svg><b>Text</b></div>
<div class="a row" style="top:430px"><span class="l" style="letter-spacing:-0.46px">Style Sheet</span><span class="c"></span><span class="v" style="letter-spacing:-0.23px">Buttons 13</span></div>
<div class="a row" style="top:449px"><span class="l" style="letter-spacing:-0.27px">Font</span><span class="c"></span><span class="v" style="letter-spacing:-0.57px">Segoe UI</span></div>
<div class="a row" style="top:468px"><span class="l" style="letter-spacing:-0.48px">Font Size</span><span class="c"></span><span class="v" style="letter-spacing:0px">12</span></div>
<div class="a row" style="top:487px"><span class="l" style="letter-spacing:-0.27px">Bold</span><span class="c"></span><span class="cb"></span></div>
<div class="a row" style="top:506px"><span class="l" style="letter-spacing:-0.13px">Italic</span><span class="c"></span><span class="cb"></span></div>
<div class="a row" style="top:525px"><span class="l" style="letter-spacing:-0.07px">Underline</span><span class="c"></span><span class="cb"></span></div>
<div class="a row" style="top:544px"><span class="l" style="letter-spacing:0px">Font Color</span><span class="c"></span><span class="v" style="letter-spacing:0.2px;left:173px">Automatic</span></div>

<div class="a" style="left:223px;top:76px;width:483px;height:1px;background:#f4f8fc"></div>
<div class="a" style="left:223px;top:76px;width:1px;height:508px;background:#f4f8fc"></div>
<div class="a" style="left:224px;top:77px;width:482px;height:24px;background:linear-gradient(#9ab5d2,#b9d1ea)"></div>
<div class="a" style="left:705px;top:76px;width:1px;height:508px;background:linear-gradient(#eef4fa 0,#e4eef8 18px,#6ad2f0 34px,#5fd0f0 100%)"></div>
<div class="a" style="left:224px;top:583px;width:482px;height:1px;background:#5fd0f0"></div>
<div class="a" style="left:230px;top:85px;line-height:14px;white-space:nowrap;letter-spacing:-.1px">Property List</div>
<div class="a" style="left:684px;top:85px;width:13px;height:13px;border:1px solid #4c1622;border-radius:2px;background:linear-gradient(#f4beb0,#eaa494 42%,#c8553a 48%,#d47458 80%,#e8a38e);box-shadow:inset 0 0 0 1px rgba(255,215,205,.6)"></div>
<svg width="13" height="13" style="left:684px;top:85px" viewBox="0 0 13 13"><path d="M4.5 4.4 L8.7 8.6 M8.7 4.4 L4.5 8.6" stroke="#3e4656" stroke-width="3.1" stroke-linecap="round"/><path d="M4.5 4.4 L8.7 8.6 M8.7 4.4 L4.5 8.6" stroke="#fff" stroke-width="1.6" stroke-linecap="round"/></svg>
<!-- <> icon -->
<div class="a" style="left:234px;top:109px;width:19px;height:15px;background:linear-gradient(#3c9af5,#1a78ea 55%,#0d5fd0)"></div>
<div class="a" style="left:243px;top:109px;width:1px;height:15px;background:#0f58c0;opacity:.6"></div>
<svg width="19" height="15" style="left:234px;top:109px" viewBox="0 0 19 15"><path d="M7 2.6 L3 7.2 L7 11.8 M12 2.6 L16 7.2 L12 11.8" fill="none" stroke="#fff" stroke-width="2.4"/></svg>
<!-- combo -->
<div class="a" style="left:255px;top:107px;width:407px;height:19px;border:1px solid #707070;border-radius:3px;background:linear-gradient(#f4f4f4,#ececec 48%,#dedede 52%,#d2d2d2);box-shadow:inset 0 0 0 1px #fafafa"></div>
<div class="a" style="left:258px;top:109px;line-height:14px;white-space:nowrap;letter-spacing:-.15px">Radio button (StdRadioBtn1)</div>
<div class="a dd" style="left:649px;top:114px"></div>
<!-- eye -->
<svg width="13" height="10" style="left:669px;top:111px" viewBox="0 0 13 10"><path d="M1.5 2 L2.5 3 M4 .5 L4.5 2 M7 0 V1.6 M9.5 .6 L9 2 M11.8 2 L10.8 3" stroke="#666" stroke-width=".7"/><ellipse cx="6.5" cy="5.6" rx="6" ry="3.8" fill="#e9e4dc" stroke="#555" stroke-width="1"/><circle cx="6.5" cy="5.6" r="3.1" fill="#1d4fa8"/><circle cx="6.5" cy="5.6" r="1.4" fill="#081a40"/><circle cx="5.6" cy="4.6" r=".8" fill="#fff"/></svg>
<div class="a dd" style="left:684px;top:114px"></div>
<!-- tabs -->
<div class="a" style="left:230px;top:131px;width:27px;height:33px;background:#fff;border-right:1px solid #909090;border-top:1px solid #a2a2a2"></div>
<div class="a" style="left:230px;top:156px;width:469px;height:8px;background:#fff"></div>
<div class="a" style="left:257px;top:155px;width:442px;height:1px;background:#8e8e8e"></div>
<div class="a" style="left:257px;top:133px;width:142px;height:22px;border-top:1px solid #8e8e8e;background:linear-gradient(#f5f5f5,#eeeeee 45%,#dddddd 55%,#d8d8d8);box-shadow:inset 0 1px 0 #fbfbfb"></div>
<div class="a" style="left:277px;top:133px;width:4px;height:22px;background:#fafafa"></div>
<div class="a" style="left:278px;top:133px;width:2px;height:23px;background:#93939d"></div>
<div class="a" style="left:301px;top:133px;width:4px;height:22px;background:#fafafa"></div>
<div class="a" style="left:302px;top:133px;width:2px;height:23px;background:#93939d"></div>
<div class="a" style="left:325px;top:133px;width:4px;height:22px;background:#fafafa"></div>
<div class="a" style="left:326px;top:133px;width:2px;height:23px;background:#93939d"></div>
<div class="a" style="left:349px;top:133px;width:4px;height:22px;background:#fafafa"></div>
<div class="a" style="left:350px;top:133px;width:2px;height:23px;background:#93939d"></div>
<div class="a" style="left:373px;top:133px;width:4px;height:22px;background:#fafafa"></div>
<div class="a" style="left:374px;top:133px;width:2px;height:23px;background:#93939d"></div>
<div class="a" style="left:398px;top:133px;width:3px;height:22px;background:#fafafa"></div>
<div class="a" style="left:398px;top:133px;width:1px;height:23px;background:#93939d"></div>
<svg width="14" height="15" style="left:234px;top:136px" viewBox="0 0 14 15"><rect x=".5" y=".5" width="13" height="14" fill="#fbfbff" stroke="#6262ae"/><path d="M1 3.5H10 M1 6.5H10 M1 9.5H10 M1 12.5H10" stroke="#7070b8" stroke-width="1.2"/><rect x="9.8" y=".8" width="3.6" height="13.4" fill="#aab4ec" stroke="#5555a5" stroke-width=".6"/><rect x="10.2" y="4" width="2.8" height="3.4" fill="#2f7fd0"/><path d="M10.4 2.8L11.6 1.4L12.8 2.8M10.4 12.2L11.6 13.6L12.8 12.2" fill="#223" stroke="#223" stroke-width=".5"/><circle cx="2.4" cy="2.2" r=".8" fill="#d02020"/><circle cx="2.4" cy="5.2" r=".8" fill="#d02020"/><circle cx="2.4" cy="8.2" r=".8" fill="#d02020"/><circle cx="2.4" cy="11.2" r=".8" fill="#d02020"/></svg>
<svg width="15" height="16" style="left:260px;top:136.5px" viewBox="0 0 15 16"><defs><linearGradient id="bk" x1="0" y1="0" x2="1" y2="1"><stop offset="0" stop-color="#a4acf0"/><stop offset="1" stop-color="#7a84d4"/></linearGradient></defs><path d="M1.6 15.2H13.8V2" fill="none" stroke="#55558a" stroke-width="1.2" opacity=".55"/><rect x=".8" y=".8" width="12.2" height="13.6" rx="1.2" fill="url(#bk)" stroke="#2e2e74" stroke-width="1.4"/><path d="M2 13H12.6" stroke="#fafaff" stroke-width="1.5"/><ellipse cx="7.4" cy="6" rx="1.5" ry="1.7" fill="none" stroke="#fff" stroke-width="1.1"/><path d="M3.6 6.2H6" stroke="#fff" stroke-width="1.1"/></svg>
<svg width="16" height="16" style="left:283px;top:137px" viewBox="-8 -8 16 16"><g fill="#7a88c8"><rect x="-1.4" y="-7.7" width="2.8" height="3.6" rx=".9" transform="rotate(0)"/><rect x="-1.4" y="-7.7" width="2.8" height="3.6" rx=".9" transform="rotate(45)"/><rect x="-1.4" y="-7.7" width="2.8" height="3.6" rx=".9" transform="rotate(90)"/><rect x="-1.4" y="-7.7" width="2.8" height="3.6" rx=".9" transform="rotate(135)"/><rect x="-1.4" y="-7.7" width="2.8" height="3.6" rx=".9" transform="rotate(180)"/><rect x="-1.4" y="-7.7" width="2.8" height="3.6" rx=".9" transform="rotate(225)"/><rect x="-1.4" y="-7.7" width="2.8" height="3.6" rx=".9" transform="rotate(270)"/><rect x="-1.4" y="-7.7" width="2.8" height="3.6" rx=".9" transform="rotate(315)"/></g><circle r="4.3" fill="none" stroke="#8090cc" stroke-width="1.9"/><circle r="3" fill="#eeeef4"/></svg>
<svg width="15" height="16" style="left:306px;top:136px" viewBox="0 0 15 16"><rect x="1.5" y="5.5" width="5" height="5" fill="#a9b8ec" stroke="#5560a8"/><circle cx="13.4" cy="4.4" r="3.2" fill="#a9c8f4" stroke="#5560a8"/><path d="M10.5 9.5 L14 15.5 H7Z" fill="#a9b8ec" stroke="#5560a8" stroke-linejoin="round"/></svg>
<svg width="16" height="16" style="left:331px;top:136px" viewBox="0 0 16 16"><path d="M1.5 1 V15 H15.5" fill="none" stroke="#2a2a66" stroke-width="1.2"/><path d="M1.5 .3 L.2 2.4 H2.8Z M16 15 L13.8 13.7 V16.3Z" fill="#2a2a66"/><path d="M2.5 12 L5.5 3 L9.5 11.5 L14.5 8.5" fill="none" stroke="#5c5ca0" stroke-width="1.1"/></svg>
<svg width="14" height="16" style="left:356px;top:137px" viewBox="0 0 14 16"><defs><linearGradient id="mn" x1="0" y1="0" x2="1" y2="1"><stop offset="0" stop-color="#dcecfc"/><stop offset="1" stop-color="#8fb4ec"/></linearGradient></defs><rect x=".8" y=".8" width="12.4" height="10.4" fill="url(#mn)" stroke="#3a3a80" stroke-width="1.6"/><path d="M7 11.5V14" stroke="#6a6ab0" stroke-width="2.4"/><path d="M3 14.5H11" stroke="#2a2a66" stroke-width="1.4"/></svg>
<svg width="14" height="4" style="left:380px;top:142px" viewBox="0 0 14 4"><circle cx="2" cy="2" r="1.2" fill="#e4e6f4" stroke="#5c68b0" stroke-width="1"/><circle cx="7" cy="2" r="1.2" fill="#e4e6f4" stroke="#5c68b0" stroke-width="1"/><circle cx="12" cy="2" r="1.2" fill="#e4e6f4" stroke="#5c68b0" stroke-width="1"/></svg>
<div class="a" style="left:230px;top:164px;width:452px;height:1px;background:#c9c9c9"></div>
<!-- scrollbar -->
<div class="a" style="left:682px;top:164px;width:17px;height:396px;background:#f0f0f0;border-left:1px solid #e4e4e4"></div>
<svg width="8" height="5" style="left:687px;top:170px" viewBox="0 0 8 5"><path d="M0 5 L4 .6 L8 5Z" fill="#404040"/></svg>
<svg width="8" height="5" style="left:687px;top:550px" viewBox="0 0 8 5"><path d="M0 0 L4 4.4 L8 0Z" fill="#404040"/></svg>
<div class="a" style="left:683px;top:182px;width:15px;height:312px;border:1px solid #959595;border-radius:2px;background:linear-gradient(90deg,#f6f6f6,#e9e9e9 45%,#d4d4d4 55%,#cfcfcf);box-shadow:inset 0 0 0 1px #fbfbfb"></div>
<div class="a" style="left:687px;top:334px;width:7px;height:1px;background:#4a4a4a;box-shadow:0 1px 0 #fafafa,0 3px 0 #4a4a4a,0 4px 0 #fafafa,0 6px 0 #4a4a4a,0 7px 0 #fafafa"></div>
<!-- bottom -->
<div class="a" style="left:230px;top:560px;width:469px;height:1px;background:#6a6a6a"></div>
<div class="a" style="left:230px;top:561px;width:469px;height:16px;background:#fff"></div>
<div class="a" style="left:232px;top:562px;line-height:14px;white-space:nowrap;font-size:11px;letter-spacing:-.15px">All Themes</div>

</body></html>
